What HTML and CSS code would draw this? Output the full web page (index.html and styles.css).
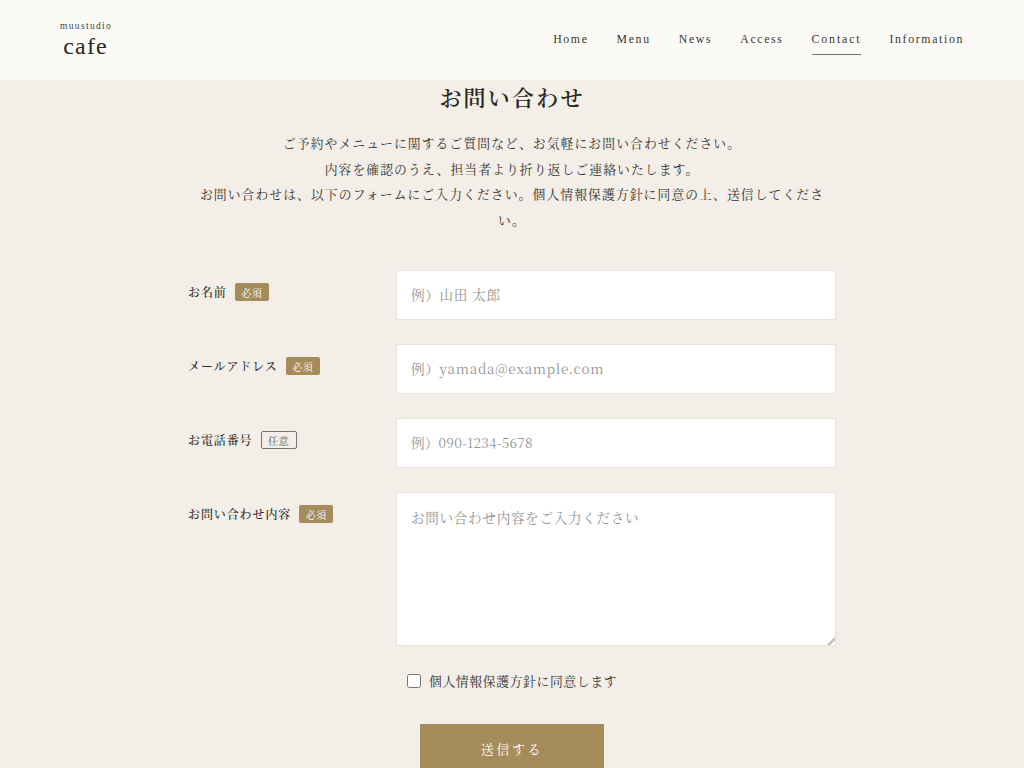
FILE: index.html
```html
<!DOCTYPE html>
<html lang="ja">
<head>
<meta charset="utf-8">
<title>お問い合わせ</title>
<link rel="stylesheet" href="styles.css">
</head>
<body>
<header class="site-header">
  <a class="logo" href="#"><span class="logo-sub">muustudio</span><span class="logo-main">cafe</span></a>
  <nav class="nav">
    <a href="#">Home</a><a href="#">Menu</a><a href="#">News</a><a href="#">Access</a><a class="current" href="#">Contact</a><a href="#">Information</a>
  </nav>
</header>
<main class="main">
  <h1 class="title">お問い合わせ</h1>
  <p class="lead">ご予約やメニューに関するご質問など、お気軽にお問い合わせください。<br>内容を確認のうえ、担当者より折り返しご連絡いたします。<br>お問い合わせは、以下のフォームにご入力ください。個人情報保護方針に同意の上、送信してください。</p>
  <form class="form">
    <div class="row">
      <label class="label"><span class="label-text">お名前</span><span class="badge">必須</span></label>
      <input class="field" type="text" placeholder="例）山田 太郎">
    </div>
    <div class="row">
      <label class="label"><span class="label-text">メールアドレス</span><span class="badge">必須</span></label>
      <input class="field" type="text" placeholder="例）yamada@example.com">
    </div>
    <div class="row">
      <label class="label"><span class="label-text">お電話番号</span><span class="badge optional">任意</span></label>
      <input class="field tel" type="text" placeholder="例）090-1234-5678">
    </div>
    <div class="row">
      <label class="label"><span class="label-text">お問い合わせ内容</span><span class="badge">必須</span></label>
      <textarea class="field area" placeholder="お問い合わせ内容をご入力ください"></textarea>
    </div>
    <label class="agree"><span class="box"></span><span class="agree-text">個人情報保護方針に同意します</span></label>
    <button class="submit" type="button">送信する</button>
  </form>
</main>
</body>
</html>
```
FILE: styles.css
```css
* { box-sizing: border-box; }
html, body { margin: 0; height: 768px; overflow: hidden; }
body {
  background: #f3eee8;
  color: #2b2722;
  font-family: "Noto Serif CJK JP", "Liberation Serif", "Noto Sans CJK JP", serif;
}
a { color: inherit; text-decoration: none; }
.site-header {
  height: 80px;
  background: #fbfaf6;
  display: flex;
  justify-content: space-between;
  align-items: center;
  padding: 0 60px;
}
.logo { display: flex; flex-direction: column; align-items: center; font-family: "Liberation Serif", serif; }
.logo-sub { font-size: 9.5px; letter-spacing: 0.14em; line-height: 12px; color: #444; }
.logo-main { font-size: 24px; line-height: 28px; letter-spacing: 0.05em; margin-left: -1px; }
.nav { display: flex; gap: 28px; font-family: "Liberation Serif", serif; font-size: 11.8px; letter-spacing: 0.14em; color: #3a3530; }
.nav a { height: 30px; padding-top: 7px; line-height: 14px; border-bottom: 1px solid transparent; }
.nav a.current { letter-spacing: 0.16em; border-bottom-color: #77736d; }
.main { display: flex; flex-direction: column; align-items: center; }
.title { margin: 2px 0 0; font-size: 22px; font-weight: 600; letter-spacing: 0.1em; line-height: 30px; }
.lead { width: 648px; margin: 18px 0 0; font-size: 12.8px; line-height: 25.6px; letter-spacing: 0.085em; text-align: center; color: #38332e; }
.form { width: 648px; margin-top: 38px; display: flex; flex-direction: column; align-items: center; }
.row { width: 100%; display: grid; grid-template-columns: 208px 440px; margin-bottom: 24px; }
.label { display: flex; align-items: center; gap: 8px; height: 18px; margin-top: 13px; font-size: 12px; font-weight: 500; letter-spacing: 0.075em; }
.label-text { margin-bottom: 1px; }
.badge { display: flex; align-items: center; justify-content: center; width: 34px; height: 18px; background: #a68c5b; border-radius: 2px; color: #fff; font-size: 10px; font-weight: 400; letter-spacing: 0.05em; }
.badge.optional { width: 36px; background: transparent; border: 1px solid #77736d; color: #5a554f; }
.field { display: block; width: 440px; height: 50px; padding: 0 14px 2px; background: #fff; border: 1px solid #e6e3de; border-radius: 0; font-family: "Noto Serif CJK JP", "Liberation Serif", "Noto Sans CJK JP", serif; font-size: 13.6px; letter-spacing: 0.05em; outline: none; }
.field::placeholder { color: #959595; opacity: 1; }
.tel { letter-spacing: 0.015em; }
.area { height: 154px; padding-top: 13px; resize: vertical; line-height: 22px; }
.area::-webkit-resizer { background: linear-gradient(135deg, transparent 70%, #c9c6c0 70%, #c9c6c0 85%, transparent 85%); }
.agree { align-self: flex-start; margin: -1px 0 0 219px; display: flex; align-items: center; gap: 8px; height: 24px; font-size: 12.8px; letter-spacing: 0.05em; color: #38332e; }
.agree-text { margin-bottom: 2px; }
.box { width: 14px; height: 14px; background: #fff; border: 1px solid #77736d; border-radius: 2.5px; }
.submit { width: 184px; height: 50px; margin-top: 31px; padding-bottom: 2px; background: #a68c5b; border: 0; color: #fff; font-family: "Noto Serif CJK JP", "Liberation Serif", "Noto Sans CJK JP", serif; font-size: 13px; letter-spacing: 0.2em; }
```
